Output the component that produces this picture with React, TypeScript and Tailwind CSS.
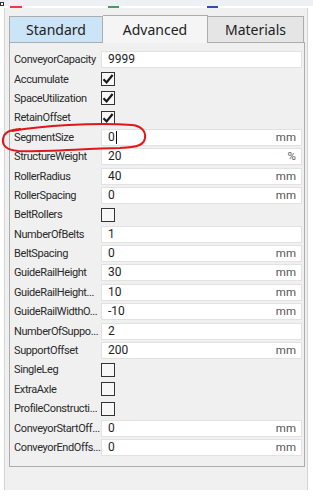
import React from "react";

type Row =
  | { label: string; kind: "text"; value: string; unit?: string; caret?: boolean }
  | { label: string; kind: "check"; checked: boolean };

// libellés tels qu'affichés (coupés par la grille)
const rows: Row[] = [
  { label: "ConveyorCapacity", kind: "text", value: "9999" },
  { label: "Accumulate", kind: "check", checked: true },
  { label: "SpaceUtilization", kind: "check", checked: true },
  { label: "RetainOffset", kind: "check", checked: true },
  { label: "SegmentSize", kind: "text", value: "0", unit: "mm", caret: true },
  { label: "StructureWeight", kind: "text", value: "20", unit: "%" },
  { label: "RollerRadius", kind: "text", value: "40", unit: "mm" },
  { label: "RollerSpacing", kind: "text", value: "0", unit: "mm" },
  { label: "BeltRollers", kind: "check", checked: false },
  { label: "NumberOfBelts", kind: "text", value: "1" },
  { label: "BeltSpacing", kind: "text", value: "0", unit: "mm" },
  { label: "GuideRailHeight", kind: "text", value: "30", unit: "mm" },
  { label: "GuideRailHeight...", kind: "text", value: "10", unit: "mm" },
  { label: "GuideRailWidthO...", kind: "text", value: "-10", unit: "mm" },
  { label: "NumberOfSuppo...", kind: "text", value: "2" },
  { label: "SupportOffset", kind: "text", value: "200", unit: "mm" },
  { label: "SingleLeg", kind: "check", checked: false },
  { label: "ExtraAxle", kind: "check", checked: false },
  { label: "ProfileConstructi...", kind: "check", checked: false },
  { label: "ConveyorStartOff...", kind: "text", value: "0", unit: "mm" },
  { label: "ConveyorEndOffs...", kind: "text", value: "0", unit: "mm" },
];

function CheckBox({ checked }: { checked: boolean }) {
  return (
    <div className="w-[14px] h-[14px] border border-[#333] bg-[#f7f7f7] flex items-center justify-center">
      {checked && (
        <svg width="12" height="12" viewBox="0 0 12 12">
          <path d="M1.5 6.2 L4.6 9.4 L10.6 2" fill="none" stroke="#1a1a1a" strokeWidth="2.2" />
        </svg>
      )}
    </div>
  );
}

export default function App() {
  return (
    <div className="relative w-[313px] h-[500px] bg-white overflow-hidden font-['Noto_Sans',sans-serif] text-[#1e1e1e]">
      {/* bande du haut */}
      <div className="h-[6px] bg-[#edf1f6] relative">
        <div className="absolute left-0 top-[2px] w-[4px] h-[4px] border border-[#333] bg-white" />
      </div>
      <div className="h-[2px] ml-[8px] mr-[8px] bg-white flex">
        <div className="ml-[2px] w-[12px] h-[2px] bg-[#e8412f]" />
        <div className="ml-[86px] w-[11px] h-[2px] bg-[#3aa35a]" />
        <div className="ml-[88px] w-[11px] h-[2px] bg-[#2b4fb3]" />
      </div>

      {/* panneau */}
      <div className="ml-[4px] mr-[5px] h-[482px] border-x border-[#d4d4d4] bg-[#f0f0f0] pl-[4px] pr-[1px] pt-[6px]">
        {/* onglets */}
        <div className="flex items-end h-[28px] text-[14px]">
          <div className="w-[94px] h-[26px] bg-[#cce4f7] border border-[#acacac] border-b-0 flex items-center justify-center text-[#222]">
            Standard
          </div>
          <div className="w-[105px] h-[28px] bg-[#f5f5f5] border-t border-r border-[#acacac] flex items-center justify-center text-[#222] relative z-10 -mb-px">
            Advanced
          </div>
          <div className="w-[96px] h-[26px] bg-[#e5e5e5] border border-l-0 border-b-0 border-[#acacac] flex items-center justify-center text-[#222]">
            Materials
          </div>
        </div>

        {/* contenu */}
        <div className="w-[296px] h-[425px] border border-[#acacac] bg-[#f0f0f0] pt-[7px] pl-[4px] pr-[2px] font-['Roboto',sans-serif] text-[11px] tracking-[-0.4px]">
          {rows.map((r) => (
            <div key={r.label} className="h-[19.4px] flex items-center">
              <div className="w-[87px] shrink-0 overflow-hidden whitespace-nowrap leading-[15px] text-[#2a2a2a]">{r.label}</div>
              {r.kind === "check" ? (
                <CheckBox checked={r.checked} />
              ) : (
                <div className="flex-1 h-[17px] bg-white border border-[#e2e2e2] flex items-center pl-[6px] pr-[5px] text-[12px] tracking-normal">
                  <span className="leading-[15px]">{r.value}</span>
                  {r.caret && <span className="w-px h-[13px] bg-[#111] ml-[1px]" />}
                  {r.unit && <span className="ml-auto text-[#555] text-[11.5px] leading-[15px]">{r.unit}</span>}
                </div>
              )}
            </div>
          ))}
        </div>
      </div>

      {/* annotation rouge */}
      <svg className="absolute left-0 top-[118px]" width="150" height="36" viewBox="0 0 150 36">
        <path
          d="M12 13 C 40 8, 95 4, 132 7 C 142 8, 146 14, 145 20 C 144 27, 138 29, 120 30 C 80 31, 40 34, 18 33 C 6 32, 2 27, 3 21 C 4 15, 8 12, 20 11"
          fill="none"
          stroke="#e3151a"
          strokeWidth="2"
          strokeLinecap="round"
        />
      </svg>
    </div>
  );
}
